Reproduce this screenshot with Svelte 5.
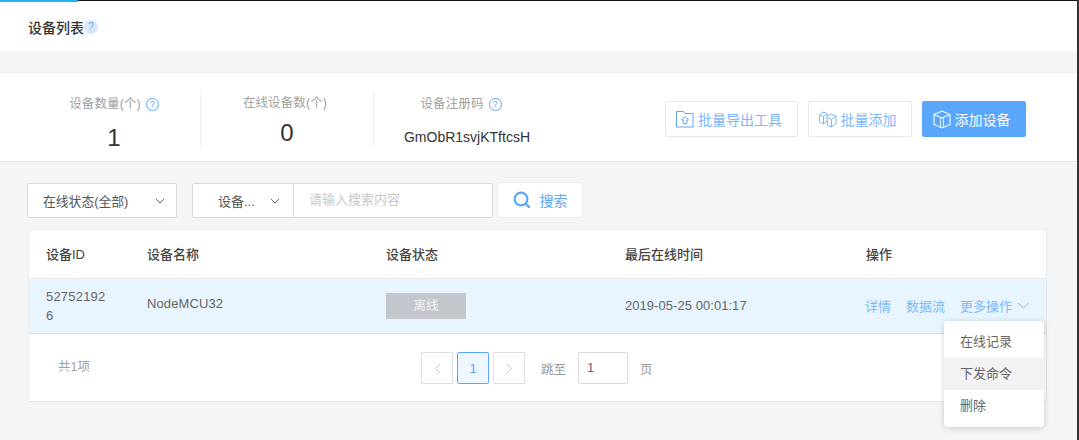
<script>
  const stats = [
    { label: '设备数量(个)', value: '1', help: true, cls: 's1' },
    { label: '在线设备数(个)', value: '0', help: false, cls: 's2' },
    { label: '设备注册码', value: 'GmObR1svjKTftcsH', help: true, cls: 's3' }
  ];
</script>

<div class="page">
  <div class="topline"></div>
  <div class="progress"></div>
  <header class="head">
    <h1>设备列表</h1>
    <span class="qhead">?</span>
  </header>

  <section class="stats">
    {#each stats as s}
      <div class="stat {s.cls}">
        <div class="label">
          {s.label}
          {#if s.help}<span class="qmark">?</span>{/if}
        </div>
        <div class="value">{s.value}</div>
      </div>
    {/each}
    <div class="actions">
      <button class="btn b1">
        <svg width="18" height="18" viewBox="0 0 18 18" fill="none" stroke="#5aa6fb" stroke-width="1">
          <path d="M0.5 17V1.5H7.5L9 3.5H17V17Z" />
          <path d="M9 6.5L5.5 10H7.2V13.5H10.8V10H12.5Z" />
        </svg>
        批量导出工具
      </button>
      <button class="btn b2">
        <svg width="18" height="18" viewBox="0 0 18 18" fill="none" stroke="#7cb8fb" stroke-width="1">
          <path d="M0.5 5L4 2L8 3.5V11L4.5 14L0.5 12Z" />
          <path d="M0.5 5L4.5 6.5V14M4.5 6.5L8 3.5" />
          <path d="M8 6L12 4L17 6V13.5L12.5 17L8.5 15.5V11" />
          <path d="M8 7.5L12.5 9.5V17M12.5 9.5L17 6" />
        </svg>
        批量添加
      </button>
      <button class="btn primary">
        <svg width="18" height="19" viewBox="0 0 18 19" fill="none" stroke="#fff" stroke-width="1.1">
          <path d="M9 1L17 4.5V14.5L9 18L1 14.5V4.5Z" />
          <path d="M1 4.5L9 8L17 4.5" />
          <path d="M7.5 7.8V17.2M10.5 7.8V17.2" stroke-opacity="0.75" />
        </svg>
        添加设备
      </button>
    </div>
  </section>

  <section class="filters">
    <div class="select status">
      <span>在线状态(全部)</span>
      <svg class="chev" width="10" height="6" viewBox="0 0 10 6"><path d="M1 1L5 5L9 1" /></svg>
    </div>
    <div class="search">
      <div class="kind">
        <span>设备...</span>
        <svg class="chev" width="10" height="6" viewBox="0 0 10 6"><path d="M1 1L5 5L9 1" /></svg>
      </div>
      <div class="ph">请输入搜索内容</div>
    </div>
    <button class="sbtn">
      <svg width="18" height="18" viewBox="0 0 18 18" fill="none" stroke="#5aa6fb" stroke-width="2.2">
        <circle cx="8" cy="8" r="6.4" />
        <path d="M12.8 12.8L16.6 16.6" />
      </svg>
      搜索
    </button>
  </section>

  <section class="card">
    <div class="row thead">
      <div class="c1">设备ID</div>
      <div class="c2">设备名称</div>
      <div class="c3">设备状态</div>
      <div class="c4">最后在线时间</div>
      <div class="c5 opshead">操作</div>
    </div>
    <div class="row tbody">
      <div class="c1 idcell">527521926</div>
      <div class="c2 name">NodeMCU32</div>
      <div class="c3"><span class="tag">离线</span></div>
      <div class="c4 time">2019-05-25 00:01:17</div>
      <div class="c5 ops">
        <span>详情</span>
        <span>数据流</span>
        <span class="more">
          更多操作
          <svg width="13" height="7" viewBox="0 0 13 7" fill="none" stroke="#7cb8fb"><path d="M1 1L6.5 6L12 1" /></svg>
        </span>
      </div>
    </div>
    <div class="foot">
      <div class="total">共1项</div>
      <div class="pager">
        <span class="pg"><svg width="7" height="11" viewBox="0 0 7 11" fill="none" stroke="#c4c7cb"><path d="M6 1L1.5 5.5L6 10" /></svg></span>
        <span class="pg on">1</span>
        <span class="pg"><svg width="7" height="11" viewBox="0 0 7 11" fill="none" stroke="#c4c7cb"><path d="M1 1L5.5 5.5L1 10" /></svg></span>
        <span class="jump">跳至</span>
        <span class="jbox">1</span>
        <span class="pageword">页</span>
      </div>
    </div>

    <ul class="menu">
      <li>在线记录</li>
      <li class="hover">下发命令</li>
      <li>删除</li>
    </ul>
  </section>
</div>

<style>
  :global(body) {
    margin: 0;
    background: #f4f5f7;
  }
  .page {
    position: relative;
    width: 1079px;
    height: 440px;
    overflow: hidden;
    box-sizing: border-box;
    background: #f4f5f7;
    border-right: 2px solid #333;
    font-family: "Liberation Sans", "Noto Sans CJK SC", sans-serif;
    font-size: 13px;
    color: #666;
  }
  .topline {
    position: absolute;
    left: 0;
    right: 0;
    top: 0;
    height: 1px;
    background: #111;
  }
  .progress {
    position: absolute;
    left: 0;
    top: 0;
    width: 78px;
    height: 2px;
    background: #1eb4f0;
  }
  .head {
    height: 51px;
    box-sizing: border-box;
    padding: 2px 0 0 28px;
    background: #fff;
    display: flex;
    align-items: center;
  }
  h1 {
    margin: 0;
    font-size: 14px;
    font-weight: 500;
    color: #333;
  }
  .qhead {
    width: 14px;
    height: 14px;
    border-radius: 50%;
    background: #d9e9fd;
    color: #5aa6fb;
    font-size: 10px;
    line-height: 14px;
    text-align: center;
  }
  .stats {
    margin-top: 21px;
    height: 88px;
    background: #fff;
    border-top: 1px solid #e9ebee;
    border-bottom: 1px solid #e4e6e9;
    display: flex;
    position: relative;
  }
  .stat {
    width: 173px;
    height: 57px;
    margin-top: 17px;
    box-sizing: border-box;
    text-align: center;
    border-right: 1px solid #f0f1f3;
  }
  .s1 { width: 201px; padding-left: 28px; }
  .s3 { border-right: 0; width: 190px; padding-right: 16px; }
  .label {
    font-size: 12.5px;
    line-height: 18px;
    color: #a0a0a0;
    letter-spacing: 0.1px;
    display: flex;
    justify-content: center;
    align-items: center;
    gap: 5px;
    padding-top: 5px;
  }
  .s2 .label { padding-top: 4px; padding-right: 4px; }
  .value {
    font-size: 24px;
    line-height: 28px;
    color: #333;
    margin-top: 11px;
  }
  .s2 .value { margin-top: 7px; }
  .s3 .value {
    font-size: 14px;
    margin: 10px 0 0 12px;
    color: #333;
  }
  .qmark {
    width: 11px;
    height: 11px;
    border: 1px solid #5aa6fb;
    border-radius: 50%;
    color: #5aa6fb;
    font-size: 9px;
    line-height: 11px;
    text-align: center;
  }
  .actions {
    position: absolute;
    left: 665px;
    top: 28px;
    display: flex;
    gap: 10px;
  }
  .btn {
    height: 36px;
    box-sizing: border-box;
    padding: 0 5px 0 0;
    background: #fff;
    border: 1px solid #e6e8eb;
    border-radius: 2px;
    color: #7cb8fb;
    font-family: inherit;
    font-size: 14px;
    display: flex;
    align-items: center;
    justify-content: center;
    gap: 4px;
  }
  .b1 { width: 133px; }
  .b2 { width: 104px; }
  .primary {
    width: 104px;
    background: #5aa6fb;
    border-color: #5aa6fb;
    color: #fff;
  }
  .filters {
    display: flex;
    margin: 21px 0 0 27px;
    height: 36px;
    align-items: flex-start;
  }
  .select {
    width: 150px;
    height: 35px;
    box-sizing: border-box;
    background: #fff;
    border: 1px solid #d9dbdf;
    border-radius: 2px;
    display: flex;
    align-items: center;
    justify-content: space-between;
    padding: 0 11px 0 15px;
    font-size: 12.8px;
    color: #555;
  }
  .chev {
    fill: none;
    stroke: #666;
    stroke-width: 1;
  }
  .search {
    margin-left: 15px;
    width: 301px;
    height: 35px;
    box-sizing: border-box;
    background: #fff;
    border: 1px solid #d9dbdf;
    border-radius: 2px;
    display: flex;
  }
  .kind {
    width: 101px;
    border-right: 1px solid #d9dbdf;
    box-sizing: border-box;
    display: flex;
    align-items: center;
    padding-left: 25px;
    gap: 15px;
    color: #555;
    font-size: 13px;
  }
  .ph {
    padding-left: 15px;
    line-height: 31px;
    color: #c8c8c8;
    font-size: 13px;
  }
  .sbtn {
    margin-left: 4px;
    width: 86px;
    height: 36px;
    margin-top: -1px;
    box-sizing: border-box;
    background: #fff;
    border: 1px solid #ebedf0;
    border-radius: 2px;
    color: #5aa6fb;
    font-family: inherit;
    font-size: 14px;
    padding: 0;
    display: flex;
    align-items: center;
    justify-content: center;
    gap: 9px;
  }
  .card {
    position: relative;
    margin: 10px 0 0 28px;
    width: 1019px;
    height: 173px;
    box-sizing: border-box;
    background: #fff;
    border-right: 1px solid #e4e6e9;
    border-bottom: 1px solid #e4e6e9;
    border-left: 1px solid #eceef0;
    border-top: 1px solid #eceef0;
  }
  .row {
    display: grid;
    grid-template-columns: 101px 239px 239px 240px 1fr;
    padding-left: 17px;
    align-items: center;
  }
  .thead {
    height: 46px;
    padding-bottom: 2px;
    border-bottom: 1px solid #e9ebee;
    font-size: 13px;
    font-weight: 500;
    color: #444;
  }
  .opshead { padding-left: 1px; }
  .tbody {
    height: 54px;
    background: #e8f5fe;
    border-bottom: 1px solid #d8dfe5;
    font-size: 13px;
    color: #666;
  }
  .idcell {
    width: 64px;
    word-break: break-all;
    line-height: 19px;
    letter-spacing: 0.2px;
  }
  .name { padding-bottom: 6px; letter-spacing: 0.1px; }
  .time { padding-bottom: 2px; letter-spacing: 0.05px; }
  .tag {
    display: block;
    width: 80px;
    height: 26px;
    background: #c3c7cb;
    color: #f4f5f6;
    text-align: center;
    font-size: 12.5px;
    line-height: 26px;
  }
  .ops {
    display: flex;
    align-items: center;
    color: #7cb8fb;
    font-size: 13px;
    gap: 15px;
    padding-bottom: 2px;
  }
  .more {
    display: flex;
    align-items: center;
    gap: 5px;
  }
  .foot {
    height: 67px;
    position: relative;
  }
  .total {
    position: absolute;
    left: 29px;
    top: 24px;
    font-size: 12.5px;
    line-height: 18px;
    color: #a0a0a0;
  }
  .pager {
    position: absolute;
    left: 392px;
    top: 18px;
    display: flex;
    align-items: center;
    gap: 4px;
  }
  .pg {
    width: 32px;
    height: 32px;
    box-sizing: border-box;
    border: 1px solid #dcdee2;
    border-radius: 2px;
    display: flex;
    align-items: center;
    justify-content: center;
    font-size: 13px;
  }
  .pg.on {
    background: #eef6ff;
    border-color: #5aa6fb;
    color: #5aa6fb;
    font-weight: 500;
  }
  .jump {
    margin-left: 12px;
    color: #999;
    font-size: 12.5px;
  }
  .jbox {
    width: 50px;
    height: 32px;
    margin-left: 8px;
    box-sizing: border-box;
    border: 1px solid #d9dbdf;
    border-radius: 2px;
    padding-left: 8px;
    font-size: 13px;
    line-height: 29px;
    color: #667;
  }
  .pageword {
    margin-left: 8px;
    color: #999;
    font-size: 12.5px;
  }
  .menu {
    position: absolute;
    left: 915px;
    top: 91px;
    width: 100px;
    margin: 0;
    padding: 5px 0;
    list-style: none;
    background: #fff;
    border-radius: 4px;
    box-shadow: 0 1px 6px rgba(0, 0, 0, 0.18);
    box-sizing: border-box;
  }
  .menu li {
    height: 32px;
    line-height: 32px;
    padding-left: 16px;
    color: #666;
    font-size: 13px;
  }
  .menu li.hover {
    background: #f2f2f3;
  }
</style>
